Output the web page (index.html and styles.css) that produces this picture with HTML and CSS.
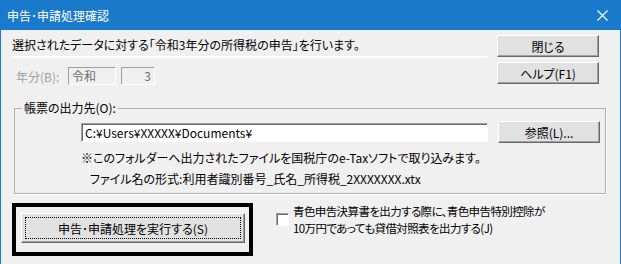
FILE: index.html
```html
<!DOCTYPE html>
<html lang="ja">
<head>
  <meta charset="UTF-8">
  <title>申告･申請処理確認</title>
  <link rel="stylesheet" href="styles.css">
</head>
<body>

  <div class="window">
    <div class="titlebar">
      <span class="title">申告･申請処理確認</span>
      <svg class="close" width="11" height="11" viewBox="0 0 11 11">
        <path d="M0.5 0.5 L10.5 10.5 M10.5 0.5 L0.5 10.5" stroke="#ffffff" stroke-width="1.1" fill="none"/>
      </svg>
    </div>

    <div class="content">
      <div class="top">
        <div class="top-left">
          <div class="message">選択されたデータに対する「令和3年分の所得税の申告」を行います。</div>
          <div class="separator"></div>
          <div class="year-row">
            <span class="year-label">年分(B):</span>
            <span class="box era">令和</span>
            <span class="box num">3</span>
          </div>
        </div>
        <div class="side-buttons">
          <button class="btn">閉じる</button>
          <button class="btn">ヘルプ(F1)</button>
        </div>
      </div>

      <fieldset class="group">
        <legend>帳票の出力先(O):</legend>
        <div class="path-row">
          <div class="path-input">C:¥Users¥XXXXX¥Documents¥</div>
          <button class="btn browse">参照(L)...</button>
        </div>
        <div class="note">※このフォルダーへ出力されたファイルを国税庁のe-Taxソフトで取り込みます。</div>
        <div class="format">ファイル名の形式:利用者識別番号_氏名_所得税_2XXXXXXX.xtx</div>
      </fieldset>

      <div class="bottom">
        <div class="exec-frame">
          <button class="btn exec"><span class="focus">申告･申請処理を実行する(S)</span></button>
        </div>
        <label class="check">
          <span class="checkbox"></span>
          <span class="check-text">
            <span class="check-line">青色申告決算書を出力する際に、青色申告特別控除が</span>
            <span class="check-line">10万円であっても貸借対照表を出力する(J)</span>
          </span>
        </label>
      </div>
    </div>
  </div>

</body>
</html>
```

FILE: styles.css
```css
body {
  margin: 0;
  padding: 0;
  background: #ffffff;
  font-family: "Noto Sans CJK JP", sans-serif;
  font-size: 12px;
  font-feature-settings: "palt";
  color: #000000;
}

.window {
  width: 621px;
  height: 264px;
  box-sizing: border-box;
  background: #f0f0f0;
  border-left: 1px solid #1979ca;
  border-right: 1px solid #1979ca;
  overflow: hidden;
}

.titlebar {
  height: 30px;
  background: #1979ca;
  display: flex;
  align-items: center;
  justify-content: space-between;
  padding: 0 12px 0 6px;
}

.title {
  color: #ffffff;
  font-size: 12px;
}

.close {
  display: block;
}

.content {
  padding: 5px 21px 0 11px;
}

.top {
  display: flex;
  gap: 10px;
}

.top-left {
  width: 475px;
}

.message {
  margin-top: 2px;
  line-height: 16px;
}

.separator {
  height: 2px;
  background: #ffffff;
  margin-top: 3px;
}

.year-row {
  display: flex;
  align-items: center;
  margin-top: 9px;
}

.year-label {
  color: #a0a0a0;
  margin-left: 4px;
  width: 52px;
}

.box {
  height: 18px;
  box-sizing: border-box;
  border: 1px solid;
  border-color: #a0a0a0 #ffffff #ffffff #a0a0a0;
  color: #6d6d6d;
  line-height: 16px;
  padding: 0 3px;
}

.era {
  width: 48px;
}

.num {
  width: 34px;
  margin-left: 5px;
  text-align: right;
}

.side-buttons {
  display: flex;
  flex-direction: column;
  gap: 5px;
}

.btn {
  width: 102px;
  height: 22px;
  padding: 0;
  font-family: "Noto Sans CJK JP", sans-serif;
  font-size: 12px;
  font-feature-settings: "palt";
  color: #000000;
  background: #e1e1e1;
  border: 1px solid;
  border-color: #ffffff #696969 #696969 #ffffff;
  box-shadow: inset -1px -1px 0 #a0a0a0;
}

.group {
  margin: 16px 0 0 2px;
  width: 592px;
  box-sizing: border-box;
  height: 93px;
  border: 1px solid #b0b0b0;
  box-shadow: 1px 1px 0 #ffffff;
  padding: 0 0 0 66px;
}

.group legend {
  margin-left: -59px;
  padding: 0 2px;
  line-height: 14px;
}

.path-row {
  display: flex;
  align-items: center;
  gap: 10px;
  margin-top: 6px;
}

.path-input {
  width: 407px;
  height: 19px;
  box-sizing: border-box;
  background: #ffffff;
  border: 1px solid;
  border-color: #a0a0a0 #ffffff #ffffff #a0a0a0;
  box-shadow: inset 1px 1px 0 #696969;
  line-height: 17px;
  padding-left: 3px;
}

.note {
  margin-top: 7px;
  line-height: 16px;
}

.format {
  margin: 5px 0 0 9px;
  line-height: 16px;
}

.bottom {
  display: flex;
  margin-top: 9px;
}

.exec-frame {
  width: 241px;
  height: 53px;
  box-sizing: border-box;
  border: 4px solid #000000;
  padding: 6px 0 0 5px;
}

.exec {
  width: 224px;
  height: 30px;
  padding: 3px;
}

.exec .focus {
  display: flex;
  align-items: center;
  justify-content: center;
  height: 100%;
  box-sizing: border-box;
  border: 1px dotted #000000;
}

.check {
  display: flex;
  align-items: flex-start;
  margin-left: 23px;
}

.checkbox {
  width: 13px;
  height: 13px;
  box-sizing: border-box;
  margin-top: 10px;
  background: #ffffff;
  border: 1px solid;
  border-color: #a0a0a0 #ffffff #ffffff #a0a0a0;
  box-shadow: inset 1px 1px 0 #696969;
}

.check-text {
  display: flex;
  flex-direction: column;
  margin-left: 4px;
  font-size: 11.5px;
  letter-spacing: -0.6px;
}

.check-line {
  line-height: 17px;
}
```
